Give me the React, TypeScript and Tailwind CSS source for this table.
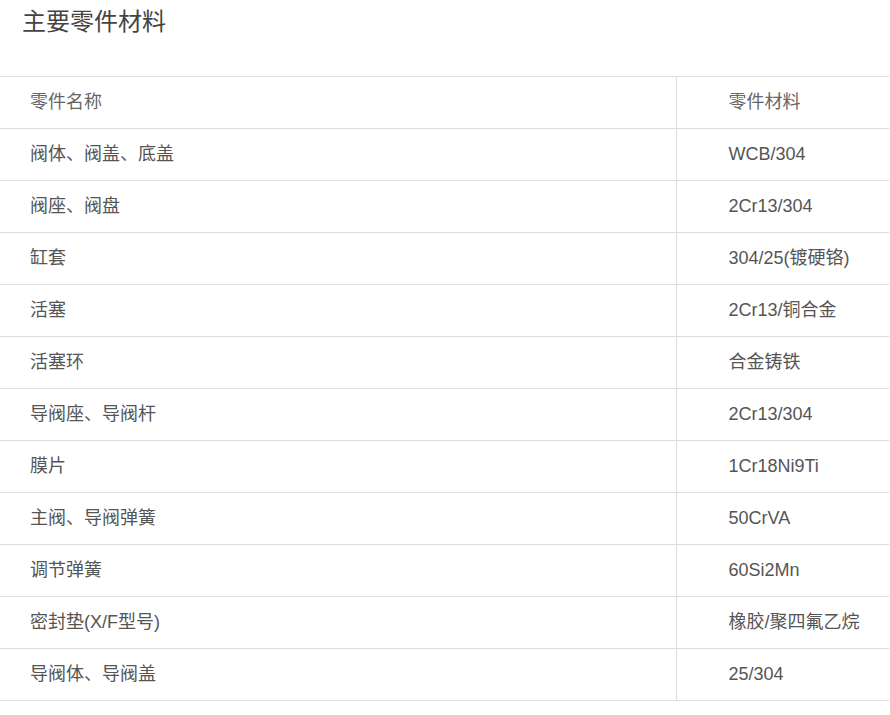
import React from "react";

const rows: [string, string][] = [
  ["阀体、阀盖、底盖", "WCB/304"],
  ["阀座、阀盘", "2Cr13/304"],
  ["缸套", "304/25(镀硬铬)"],
  ["活塞", "2Cr13/铜合金"],
  ["活塞环", "合金铸铁"],
  ["导阀座、导阀杆", "2Cr13/304"],
  ["膜片", "1Cr18Ni9Ti"],
  ["主阀、导阀弹簧", "50CrVA"],
  ["调节弹簧", "60Si2Mn"],
  ["密封垫(X/F型号)", "橡胶/聚四氟乙烷"],
  ["导阀体、导阀盖", "25/304"],
];

const App = () => {
  return (
    <div
      className="w-[890px] bg-white"
      style={{ fontFamily: '"Liberation Sans", Arial, "Noto Sans CJK SC", sans-serif' }}
    >
      <div className="h-[76px] pl-[22px] pt-[6px]">
        <h2 className="text-[24px] leading-[32px] text-[#444]">主要零件材料</h2>
      </div>

      {/* table */}
      <table className="w-[889px] border-collapse text-[18px] text-[#555]">
        <thead>
          <tr className="h-[52px] border-y border-[#ddd]">
            <th className="w-[676px] pl-[30px] text-left font-normal text-[#666]">零件名称</th>
            <th className="border-l border-[#ddd] pl-[52px] text-left font-normal text-[#666]">
              零件材料
            </th>
          </tr>
        </thead>
        <tbody>
          {rows.map((row, index) => (
            <tr key={index} className="h-[52px] border-b border-[#ddd]">
              <td className="pl-[30px]">{row[0]}</td>
              <td className="border-l border-[#ddd] pl-[52px]">{row[1]}</td>
            </tr>
          ))}
        </tbody>
      </table>
    </div>
  );
};

export default App;
